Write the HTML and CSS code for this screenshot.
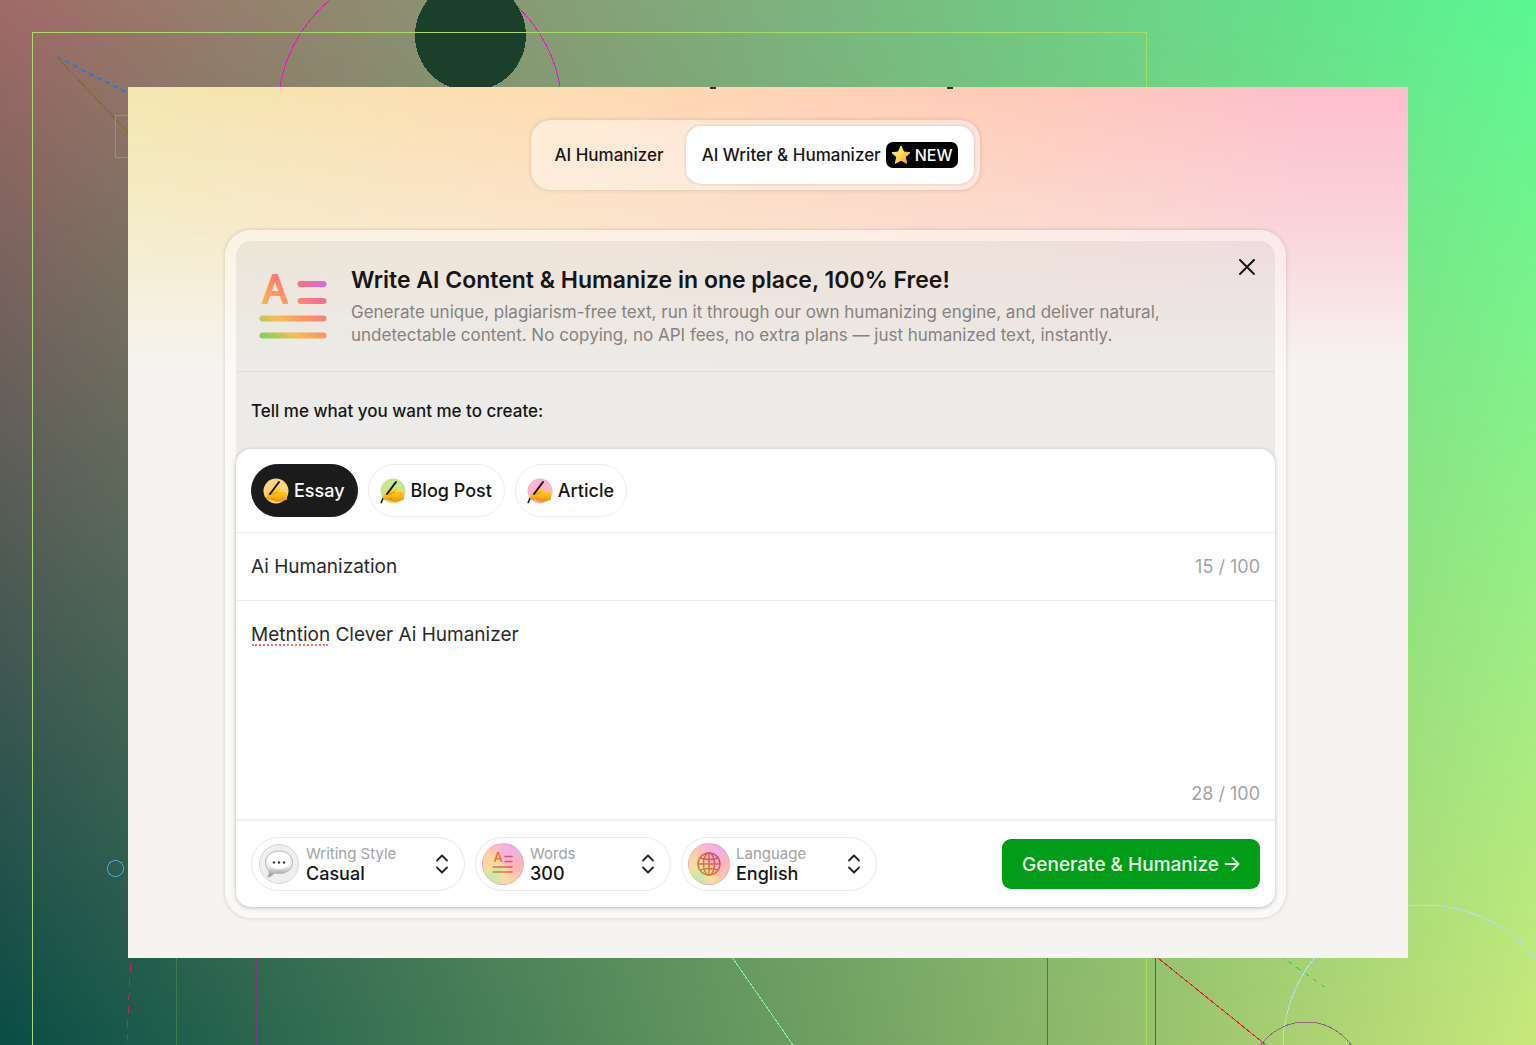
FILE: index.html
```html
<!DOCTYPE html>
<html lang="en">
<head>
	<meta charset="UTF-8">
	<meta name="viewport" content="width=device-width, initial-scale=1">
	<title>AI Writer &amp; Humanizer</title>
	<link rel="stylesheet" href="styles.css">
</head>
<body>
	<svg class="backdrop" viewBox="0 0 1536 1045" preserveAspectRatio="xMidYMid slice" fill="none" shape-rendering="crispEdges" aria-hidden="true">
		<circle cx="420" cy="110" r="142" stroke="#f511c4"/>
		<circle cx="470.5" cy="35.5" r="55.5" fill="#1b3f2b"/>
		<path d="M32.5 1045V32.5H1146.5V1045" stroke="#a4de62"/>
		<path d="M57 57L140 99" stroke="#1a7df0" stroke-width="2" stroke-dasharray="5 4"/>
		<path d="M57 57L140 145" stroke="#86682c"/>
		<path d="M140 115.5H115.5V157.5H140" stroke="#35d022"/>
		<circle cx="115.5" cy="868.5" r="8" stroke="#3fa9d4"/>
		<path d="M131 950L127 1041" stroke="#b3286c" stroke-dasharray="8 6"/>
		<path d="M176.5 950V1045" stroke="#3e7c50"/>
		<path d="M256.5 950V1045" stroke="#80397c"/>
		<path d="M727 950L793 1045" stroke="#7df0a0"/>
		<path d="M1047.5 950V1045" stroke="#3f7d4c"/>
		<path d="M1155.5 950V1045" stroke="#7b4a6a"/>
		<path d="M1148 950L1266 1045" stroke="#e01f3d"/>
		<path d="M1272 950L1329 990" stroke="#14e45c" stroke-dasharray="5 5"/>
		<circle cx="1425" cy="1047" r="142" stroke="#b4dfe4"/>
		<circle cx="1306" cy="1078" r="56" stroke="#8f6a7c"/>
	</svg>

	<main class="page">
		<span class="cut cut-left"></span>
		<span class="cut cut-right"></span>

		<nav class="tabs">
			<button type="button" class="tab">AI Humanizer</button>
			<button type="button" class="tab active">AI Writer &amp; Humanizer
				<span class="badge">
					<svg width="20" height="20" viewBox="0 0 20 20" aria-hidden="true">
						<path d="M10 1L12.7 7L19 7.7L14.3 12L15.7 18.4L10 15.2L4.3 18.4L5.7 12L1 7.7L7.3 7Z" fill="url(#star)" stroke="url(#star)" stroke-linejoin="round"/>
					</svg>
					NEW
				</span>
			</button>
		</nav>

		<section class="card">
			<header class="intro">
				<svg class="logo" width="70" height="70" viewBox="0 0 70 70" aria-hidden="true">
					<text x="17" y="31" text-anchor="middle" class="logo-letter">A</text>
					<path d="M42.5 12H65.500M42.500 29H65.500M4.500 46.500H65.500M4.500 63.500H65.500" stroke="url(#rainbow)" stroke-width="6" stroke-linecap="round"/>
				</svg>
				<div class="intro-text">
					<h2>Write AI Content &amp; Humanize in one place, 100% Free!</h2>
					<p>Generate unique, plagiarism-free text, run it through our own humanizing engine, and deliver natural, undetectable content. No copying, no API fees, no extra plans — just humanized text, instantly.</p>
				</div>
				<button type="button" class="close" aria-label="Close">
					<svg width="18" height="18" viewBox="0 0 18 18"><path d="M2 2L16 16M16 2L2 16" stroke="#111" stroke-width="2" stroke-linecap="round"/></svg>
				</button>
			</header>

			<p class="prompt">Tell me what you want me to create:</p>

			<form class="composer">
				<div class="chips">
					<button type="button" class="chip active"><svg class="hand" width="28" height="28" viewBox="0 0 28 28" aria-hidden="true"><circle cx="14" cy="14" r="12.500" fill="#ffd47c"/><use href="#hand"/></svg>Essay</button>
					<button type="button" class="chip"><svg class="hand" width="28" height="28" viewBox="0 0 28 28" aria-hidden="true"><circle cx="14" cy="14" r="12.500" fill="#c9e68c"/><use href="#hand"/></svg>Blog Post</button>
					<button type="button" class="chip"><svg class="hand" width="28" height="28" viewBox="0 0 28 28" aria-hidden="true"><circle cx="14" cy="14" r="12.500" fill="#f6b4d2"/><use href="#hand"/></svg>Article</button>
				</div>

				<div class="topic">
					<input type="text" value="Ai Humanization" maxlength="100" aria-label="Topic">
					<span class="count">15 / 100</span>
				</div>

				<div class="details">
					<textarea maxlength="100" spellcheck="false" aria-label="Details">Metntion Clever Ai Humanizer</textarea>
					<span class="misspelled"></span>
					<span class="count">28 / 100</span>
				</div>

				<div class="options">
					<div class="option wide">
						<svg class="option-icon" width="42" height="42" viewBox="0 0 42 42" fill="none" aria-hidden="true">
							<circle cx="21" cy="21" r="19.500" fill="#efefef" stroke="#d6d6d6"/>
							<path d="M21 8C29 8 34.500 12.500 34.500 19.500S29 30.500 21 30.500C19.500 30.500 18 30.400 16.500 30C14.500 32.500 12 34 9.500 34C11 32 11.500 30 11 27.500C8.500 25.500 7.500 22.500 7.500 19.500C7.500 12.500 13 8 21 8Z" fill="url(#bubble)" stroke="#b5b5b5"/>
							<ellipse cx="21" cy="18" rx="11" ry="8" fill="#fff"/>
							<circle cx="16" cy="19.500" r="1.300" fill="#444"/><circle cx="21" cy="19.500" r="1.300" fill="#444"/><circle cx="26" cy="19.500" r="1.300" fill="#444"/>
						</svg>
						<div class="option-body">
							<label for="style">Writing Style</label>
							<select id="style"><option>Casual</option><option>Formal</option></select>
						</div>
						<svg class="arrows" width="14" height="20" viewBox="0 0 14 20"><use href="#arrows"/></svg>
					</div>
					<div class="option">
						<span class="option-icon tinted">
							<svg width="24" height="24" viewBox="0 0 24 24" fill="none" aria-hidden="true">
								<text x="7" y="10" text-anchor="middle" class="mini-letter">A</text>
								<path d="M14 4.500H21M14 9.500H21M2 15H21M2 20H21" stroke="url(#ink)" stroke-width="1.500" stroke-linecap="round"/>
							</svg>
						</span>
						<div class="option-body">
							<label for="words">Words</label>
							<select id="words"><option>300</option><option>500</option></select>
						</div>
						<svg class="arrows" width="14" height="20" viewBox="0 0 14 20"><use href="#arrows"/></svg>
					</div>
					<div class="option">
						<span class="option-icon tinted">
							<svg width="24" height="24" viewBox="0 0 24 24" fill="none" stroke="url(#ink)" stroke-width="1.500" aria-hidden="true">
								<circle cx="12" cy="12" r="11"/><ellipse cx="12" cy="12" rx="5.500" ry="11"/>
								<path d="M12 1V23M1 12H23M3 6Q12 9 21 6M3 18Q12 15 21 18"/>
							</svg>
						</span>
						<div class="option-body">
							<label for="language">Language</label>
							<select id="language"><option>English</option><option>Spanish</option></select>
						</div>
						<svg class="arrows" width="14" height="20" viewBox="0 0 14 20"><use href="#arrows"/></svg>
					</div>
					<button type="button" class="generate">Generate &amp; Humanize
						<svg width="16" height="16" viewBox="0 0 16 16" fill="none" aria-hidden="true"><path d="M1.500 8H14M8.500 2L14.500 8L8.500 14" stroke="#e9fbe9" stroke-width="1.800" stroke-linecap="round" stroke-linejoin="round"/></svg>
					</button>
				</div>
			</form>
		</section>
	</main>

	<!-- shared shapes and gradients -->
	<svg class="defs" width="0" height="0" aria-hidden="true">
		<defs>
			<linearGradient id="rainbow" gradientUnits="userSpaceOnUse" x1="8" y1="68" x2="64" y2="6">
				<stop offset="0" stop-color="#7ed25c"/><stop offset=".27" stop-color="#f3bf50"/><stop offset=".5" stop-color="#ff9465"/><stop offset=".78" stop-color="#fa6f8c"/><stop offset="1" stop-color="#cf6fe0"/>
			</linearGradient>
			<linearGradient id="letter" gradientUnits="userSpaceOnUse" x1="6" y1="34" x2="22" y2="4">
				<stop offset="0" stop-color="#fbb550"/><stop offset=".5" stop-color="#ff9762"/><stop offset="1" stop-color="#fc7676"/>
			</linearGradient>
			<linearGradient id="star" x1="0" y1="0" x2="1" y2="1">
				<stop offset="0" stop-color="#fff3a0"/><stop offset=".5" stop-color="#ffdc4c"/><stop offset="1" stop-color="#f29a1c"/>
			</linearGradient>
			<linearGradient id="bubble" x1="0" y1="0" x2="0" y2="1">
				<stop offset="0" stop-color="#fff"/><stop offset=".6" stop-color="#ececec"/><stop offset="1" stop-color="#8f8f8f"/>
			</linearGradient>
			<linearGradient id="ink" gradientUnits="userSpaceOnUse" x1="2" y1="22" x2="22" y2="2">
				<stop offset="0" stop-color="#d08a3c"/><stop offset=".5" stop-color="#e0653f"/><stop offset="1" stop-color="#cf4f78"/>
			</linearGradient>
			<linearGradient id="skin" x1="0" y1="0" x2="0" y2="1">
				<stop offset="0" stop-color="#ffd021"/><stop offset=".6" stop-color="#fdb515"/><stop offset="1" stop-color="#e98a12"/>
			</linearGradient>
			<g id="hand">
				<path d="M8 18.500L4 21.500L2.200 25.500" stroke="#191410" stroke-width="1.600" fill="none" stroke-linecap="round"/>
				<path d="M4 20C5 16.500 8 14 10.500 13L13 12.500L17 11.500C19 11.200 19.500 13 18 13.500L15.500 15C19 14.500 22 15.500 25 15.500V22.500C22 24 17 25.500 13.500 24.500C11.500 24.200 10.500 23.500 9.500 22.500C7 23.500 3.500 22.500 4 20Z" fill="url(#skin)"/>
				<path d="M15.500 15L10 17.500M9.500 22.500L13 21" stroke="#d9820f" stroke-width=".8" fill="none" stroke-linecap="round"/>
				<path d="M17 5L8 17" stroke="#191410" stroke-width="2" stroke-linecap="round"/>
			</g>
			<path id="arrows" d="M2 6.500L7 1.500L12 6.500M2 13.500L7 18.500L12 13.500" fill="none" stroke="#222" stroke-width="1.800" stroke-linecap="round" stroke-linejoin="round"/>
		</defs>
	</svg>
</body>
</html>
```
FILE: styles.css
```css
*{padding:0;margin:0;box-sizing:border-box;}
body{
	position:relative;
	min-height:100vh;
	padding:87px 8.3333%;
	background:linear-gradient(90deg,#094d46,#c9e87b);
	font-family:Inter,"Liberation Sans",sans-serif;
	color:#161616;
}
button,input,select,textarea{
	font:inherit;
	color:inherit;
	border:none;
	background:transparent;
	outline:none;
}
button,select{cursor:pointer;}
svg{overflow:visible;}
/* top colours fade into the bottom ones */
body::before{
	content:"";
	position:absolute;
	inset:0;
	background:linear-gradient(90deg,#a16a66,#5af793);
	-webkit-mask-image:linear-gradient(#000,transparent);
	mask-image:linear-gradient(#000,transparent);
}
.backdrop{
	position:absolute;
	top:0;
	left:0;
	width:100%;
	height:100%;
	overflow:hidden;
}
.defs{position:absolute;}

.page{
	position:relative;
	overflow:hidden;
	padding:33px 122px 40px 97px;
	background:#f6f4f1;
}
.page::before{
	content:"";
	position:absolute;
	top:0;
	left:0;
	right:0;
	height:280px;
	background:linear-gradient(90deg,#f3e7b0,#ffdab2 35%,#ffc9b8 70%,#fdbecb 92%);
	-webkit-mask-image:linear-gradient(#000,rgba(0,0,0,.6) 50%,transparent);
	mask-image:linear-gradient(#000,rgba(0,0,0,.6) 50%,transparent);
}
.cut{
	position:absolute;
	top:0;
	width:6px;
	height:2px;
	background:#333;
}
.cut-left{left:45.5%;}
.cut-right{left:64%;}

.tabs{
	position:relative;
	display:flex;
	align-items:center;
	width:fit-content;
	height:70px;
	margin:0 auto 40px;
	padding:6px;
	border-radius:20px;
	background:rgba(255,255,255,.4);
	box-shadow:0 0 4px rgba(0,0,0,.16);
}
.tab{
	display:flex;
	align-items:center;
	gap:5px;
	height:58px;
	padding:0 22px 0 17px;
	border-radius:15px;
	font-size:17px;
	font-weight:500;
}
.tab.active{
	padding:0 16px;
	background:#fff;
	box-shadow:0 0 3px rgba(0,0,0,.2);
}
.badge{
	display:flex;
	align-items:center;
	gap:4px;
	height:26px;
	padding:0 5px;
	border-radius:7px;
	background:#000;
	color:#fff;
	font-size:16px;
}

.card{
	position:relative;
	padding:11px;
	border-radius:26px;
	background:rgba(255,255,255,.45);
	box-shadow:0 0 4px rgba(0,0,0,.16);
}
.intro{
	display:flex;
	height:131px;
	padding:16px 16px 0 22px;
	border-bottom:1px solid rgba(0,0,0,.05);
	border-radius:15px 15px 0 0;
	background:rgba(60,60,60,.07);
}
.logo{
	flex:none;
	margin:15px 23px 0 0;
}
.logo-letter{
	font-size:38px;
	font-weight:400;
	fill:url(#letter);
	stroke:url(#letter);
	stroke-width:2;
	stroke-linejoin:round;
}
.intro-text{
	flex:1;
	padding-top:9px;
}
.intro h2{
	margin-bottom:6px;
	font-size:23px;
	font-weight:600;
	line-height:29px;
}
.intro p{
	max-width:850px;
	font-size:17px;
	line-height:23px;
	color:#858280;
}
.close{
	width:24px;
	height:24px;
	margin-left:8px;
}
.prompt{
	height:92px;
	margin-bottom:-15px;
	padding:0 15px;
	background:rgba(60,60,60,.07);
	font-size:17px;
	font-weight:500;
	line-height:78px;
}

.composer{
	position:relative;
	border-radius:15px;
	background:#fff;
	box-shadow:0 1px 4px rgba(0,0,0,.26);
}
.chips{
	display:flex;
	gap:10px;
	padding:15px;
	border-bottom:1px solid #ececec;
}
.chip{
	display:flex;
	align-items:center;
	gap:4px;
	height:53px;
	padding:0 12px 0 10px;
	border:1px solid #ebebeb;
	border-radius:27px;
	font-size:18px;
	font-weight:500;
}
.chip.active{
	border-color:#1b1b1b;
	background:#1b1b1b;
	color:#fff;
}
.topic{
	display:flex;
	align-items:center;
	height:68px;
	padding:0 15px;
	border-bottom:1px solid #ececec;
}
.topic input{
	flex:1;
	min-width:0;
	font-size:19px;
	color:#2a2a2a;
}
.count{
	font-size:18px;
	color:#a3a3a3;
}
.details{
	position:relative;
	display:flex;
	align-items:flex-end;
	height:220px;
	padding:20px 15px 15px;
	border-bottom:2px solid #efefef;
}
.details textarea{
	flex:1;
	height:100%;
	resize:none;
	font-size:19px;
	line-height:28px;
	color:#2a2a2a;
}
/* spelling mark under the first word */
.misspelled{
	position:absolute;
	top:43px;
	left:16px;
	width:76px;
	border-bottom:2px dotted #f0706c;
}
.options{
	display:flex;
	gap:10px;
	align-items:center;
	padding:16px 15px;
}
.option{
	position:relative;
	display:flex;
	align-items:center;
	width:196px;
	height:54px;
	padding:0 15px 0 6px;
	border:1px solid #e8e8e8;
	border-radius:27px;
}
.option.wide{width:214px;}
.option-icon{
	flex:none;
	width:42px;
	height:42px;
	margin-right:6px;
}
.tinted{
	display:flex;
	align-items:center;
	justify-content:center;
	border:1px solid rgba(0,0,0,.08);
	border-radius:50%;
	background:conic-gradient(from 0deg,#f6b3d8,#efb2e4 35deg,#fbb3c0 80deg,#ffc2b4 130deg,#f6e09c 175deg,#c4e8ae 215deg,#f2dfa0 255deg,#ffd3a4 295deg,#ffc0b8 330deg,#f6b3d8);
}
.mini-letter{
	font-size:13px;
	font-weight:500;
	fill:#e0703c;
}
.option-body{
	flex:1;
	min-width:0;
	padding-top:2px;
}
.option label{
	display:block;
	font-size:15px;
	line-height:18px;
	color:#a3a3a3;
}
.option select{
	display:block;
	width:100%;
	height:22px;
	appearance:none;
	-webkit-appearance:none;
	font-size:18px;
	font-weight:500;
	line-height:22px;
}
.arrows{
	flex:none;
	pointer-events:none;
}
.generate{
	display:flex;
	align-items:center;
	gap:5px;
	height:50px;
	margin-left:auto;
	padding:0 20px;
	border-radius:9px;
	background:#029d18;
	color:#e9fbe9;
	font-size:19px;
	font-weight:500;
}
```
